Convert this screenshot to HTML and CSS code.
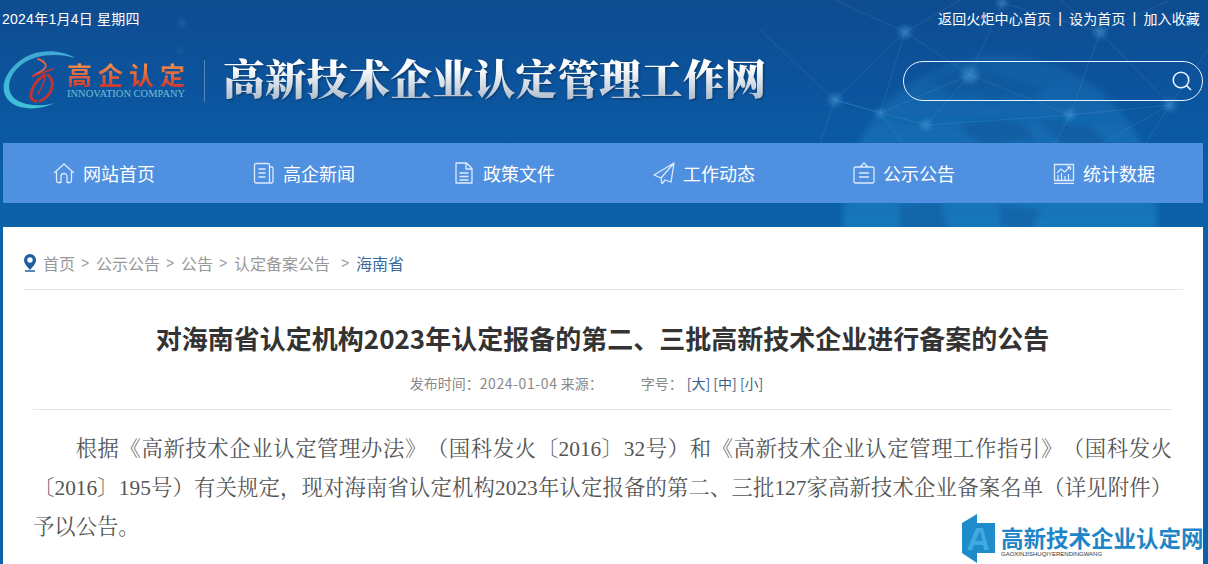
FILE: index.html
```html
<!DOCTYPE html>
<html lang="zh-CN">
<head>
<meta charset="utf-8">
<title>高新技术企业认定管理工作网</title>
<link rel="stylesheet" href="styles.css">
</head>
<body>
<svg class="bg-art" width="1208" height="232" viewBox="0 0 1208 232" aria-hidden="true">
  <defs>
    <linearGradient id="globe" x1="0" y1="0" x2="0" y2="1">
      <stop offset="0" stop-color="#2a86c8" stop-opacity=".2"/>
      <stop offset=".5" stop-color="#1c86c8" stop-opacity=".55"/>
      <stop offset="1" stop-color="#22a0d2" stop-opacity=".75"/>
    </linearGradient>
    <filter id="soft"><feGaussianBlur stdDeviation="2.500"/></filter>
    <filter id="softer"><feGaussianBlur stdDeviation="3"/></filter>
  </defs>
  <circle cx="1000" cy="212" r="157" fill="url(#globe)" filter="url(#softer)"/>
  <path d="M930 75l50-6 30 10 32 8-10 12-22-4-16 6-20-8-24 4zM960 125l36-6 28 6 10 14-50 6-20-12zM1040 120l50 6 20 20-44 2zM1000 205l40 5-10 22-30-6zM900 205l40-3 10 30-50 0z" fill="#0b4f92" opacity=".4" filter="url(#soft)"/>
  <g stroke="#7cc2ee" stroke-width="1" opacity=".14" fill="none">
    <path d="M905 32L970 75 1002 3 1100 32 1070 115 970 75 880 113 905 32M1100 32L1170 105 1070 115 1035 180 1170 105 1208 50M880 113L940 190 1035 180 1110 200 1170 105M835 100L905 32M835 100L880 113M835 100L760 30M835 100L820 143M835 100L926 125 970 75M926 125L1070 115M905 32L960 0M1100 32L1060 0M1100 32L1170 0M905 32L835 0"/>
  </g>
  <g fill="#5fb0e6" opacity=".38" filter="url(#soft)">
    <circle cx="905" cy="32" r="6"/><circle cx="970" cy="75" r="8"/><circle cx="1002" cy="3" r="5"/><circle cx="1100" cy="32" r="6"/><circle cx="1070" cy="115" r="5"/><circle cx="880" cy="113" r="4"/><circle cx="835" cy="100" r="6"/><circle cx="1170" cy="105" r="6"/><circle cx="926" cy="125" r="5"/>
    <circle cx="182" cy="23" r="2.500"/><circle cx="180" cy="51" r="2"/>
  </g>
</svg>

<div class="page">
  <header class="site-header">
    <div class="topbar">
      <span class="today">2024年1月4日 星期四</span>
      <nav class="toplinks"><a>返回火炬中心首页</a><i>|</i><a>设为首页</a><i>|</i><a>加入收藏</a></nav>
    </div>
    <div class="brand-row">
      <div class="brand">
        <div class="logo">
          <svg class="logo-mark" width="76" height="60" viewBox="0 0 76 60" aria-hidden="true">
            <defs>
              <linearGradient id="arc" x1="0" y1="0" x2="0" y2="1">
                <stop offset="0" stop-color="#3fa9d2"/><stop offset="1" stop-color="#3fc3d8"/>
              </linearGradient>
            </defs>
            <path d="M72 7C55-3 30-2 14 12-2 26-4 44 10 53c10 6 28 6 42-1-14 4-32 3-41-5C2 38 6 24 18 14 32 3 55 2 72 7z" fill="url(#arc)"/>
            <g fill="none" stroke="#c8322f" stroke-linecap="round">
              <path d="M35 8c8 3 10 7 5 11-4 3-7 4-10 6" stroke-width="2" stroke="#d8604e"/>
              <path d="M30 25c6-2 12-4 20-7" stroke-width="1.800"/>
              <path d="M42 24c-8 4-14 13-14 21 0 3 2 5 5 5" stroke-width="2.800"/>
              <path d="M45 24c5 4 6 12 1 19-3 4-6 6-9 7" stroke-width="2.800"/>
              <path d="M42 26c-1 6-4 12-7 17" stroke-width="1.500"/>
            </g>
          </svg>
          <div class="logo-text">
            <div class="logo-cn">高企认定</div>
            <div class="logo-en">INNOVATION COMPANY</div>
          </div>
        </div>
        <span class="brand-rule"></span>
        <h1 class="site-title">高新技术企业认定管理工作网</h1>
      </div>
      <div class="search">
        <svg width="22" height="22" viewBox="0 0 22 22" fill="none" stroke="#e8f5ff" stroke-width="1.600" aria-hidden="true"><circle cx="10" cy="10" r="7.800"/><path d="M15.600 15.600L20 20"/></svg>
      </div>
    </div>
    <nav class="mainnav">
      <a class="nav-item">
        <svg class="nav-ico" viewBox="0 0 22 22" aria-hidden="true"><path d="M1 11L11 2l10 9M3.500 9.500V19a1.500 1.500 0 0 0 1.500 1.500h3V14.500a3 3 0 0 1 6 0V20.500h3a1.500 1.500 0 0 0 1.500-1.500V9.500"/></svg>网站首页</a>
      <a class="nav-item">
        <svg class="nav-ico" viewBox="0 0 22 22" aria-hidden="true"><path d="M3 1.500h12a1.500 1.500 0 0 1 1.500 1.500v18H3A1.500 1.500 0 0 1 1.500 19.500V3A1.500 1.500 0 0 1 3 1.500zM17 5h1.500A1.500 1.500 0 0 1 20 6.500V19a2 2 0 0 1-2 2h-2M5.500 7h7M5.500 11h7M5.500 15h7"/></svg>高企新闻</a>
      <a class="nav-item">
        <svg class="nav-ico" viewBox="0 0 22 22" aria-hidden="true"><path d="M3 1h10.500L19 6.500V21H3zM13 1v6h6M6.500 11h9M6.500 14.500h9M6.500 18h9"/></svg>政策文件</a>
      <a class="nav-item">
        <svg class="nav-ico" viewBox="0 0 22 22" aria-hidden="true"><path d="M21 1L1 13l7 3 1 6 3-4 6 2zM21 1L8 16"/></svg>工作动态</a>
      <a class="nav-item">
        <svg class="nav-ico" viewBox="0 0 22 22" aria-hidden="true"><path d="M2.500 5h17A1.500 1.500 0 0 1 21 6.500v13a1.500 1.500 0 0 1-1.500 1.500h-17A1.500 1.500 0 0 1 1 19.500v-13A1.500 1.500 0 0 1 2.500 5zM7 5l4-4 4 4M6 11h10M6 15h10"/></svg>公示公告</a>
      <a class="nav-item">
        <svg class="nav-ico" viewBox="0 0 22 22" aria-hidden="true"><path d="M1.500 18.500V2.500h19v16zM1 21.500h20M5 18v-5M8.500 18v-7M12 18v-4M15.500 18v-6M4 11l4-4 3.500 3L17 5M14 5h3.500v3"/></svg>统计数据</a>
    </nav>
  </header>

  <main class="panel">
    <div class="crumbs">
      <svg class="pin" width="14" height="18" viewBox="0 0 14 18" aria-hidden="true"><path d="M7 0a6 6 0 0 1 6 6c0 4-4 7.500-6 10C5 13.500 1 10 1 6a6 6 0 0 1 6-6zm0 3.300a2.700 2.700 0 1 0 0 5.400 2.700 2.700 0 0 0 0-5.400z" fill="#1c5e9e" fill-rule="evenodd"/><path d="M2 17h10" stroke="#1c5e9e" stroke-width="1.500"/></svg>
      <a>首页</a><span class="sep">&gt;</span><a>公示公告</a><span class="sep">&gt;</span><a>公告</a><span class="sep">&gt;</span><a>认定备案公告</a><span class="sep sep-wide">&gt;</span><a class="current">海南省</a>
    </div>
    <article class="article">
      <h2 class="article-title">对海南省认定机构2023年认定报备的第二、三批高新技术企业进行备案的公告</h2>
      <div class="meta"><span>发布时间：<span class="date">2024-01-04</span> 来源：</span><span class="size-label">字号：</span><span class="sizes"><a>[大]</a> <a>[中]</a> <a>[小]</a></span></div>
      <p class="article-body">根据《高新技术企业认定管理办法》（国科发火〔2016〕32号）和《高新技术企业认定管理工作指引》（国科发火〔2016〕195号）有关规定，现对海南省认定机构2023年认定报备的第二、三批127家高新技术企业备案名单（详见附件）予以公告。</p>
    </article>
  </main>
</div>

<div class="watermark">
  <svg width="38" height="50" viewBox="0 0 38 50" aria-hidden="true"><path d="M1 9L16 0v9h18v30H16v10L1 39z" fill="#1e8ccb"/><path d="M6 36L15 14h7l6 22h-5l-1-5h-9l-2 5zm8.500-9h7l-2-9h-1z" fill="#3fa9e0"/></svg>
  <div class="wm-text"><div class="wm-cn">高新技术企业认定网</div><div class="wm-en">GAOXINJISHUQIYERENDINGWANG</div></div>
</div>
</body>
</html>
```
FILE: styles.css
```css
* { box-sizing: border-box; }
html, body { margin: 0; height: 564px; overflow: hidden; }
body {
  position: relative;
  background: linear-gradient(180deg, #0e4c90 0, #0c539c 80px, #0a5ba4 150px, #0c62a8 232px);
  font-family: "Liberation Sans", "Noto Sans CJK SC", sans-serif;
  color: #333;
  text-spacing-trim: space-all;
}
a { color: inherit; text-decoration: none; }
.bg-art { position: absolute; left: 0; top: 0; }
.page { position: relative; width: 1200px; margin-left: 3px; }

.topbar {
  height: 36px;
  margin: 0 3px 0 -1px;
  display: flex;
  justify-content: space-between;
  align-items: center;
  color: #fff;
  font-size: 14px;
}
.today { letter-spacing: .25px; }
.toplinks { display: flex; align-items: center; letter-spacing: .15px; }
.toplinks i { font-style: normal; margin: 0 7px; }

.brand-row {
  height: 107px;
  padding-bottom: 17px;
  display: flex;
  justify-content: space-between;
  align-items: center;
}
.brand { display: flex; align-items: center; }
.logo { display: flex; align-items: center; width: 181px; }
.logo-mark { flex: none; margin-right: -12px; }
.logo-text { margin-bottom: 2px; }
.logo-cn {
  font: 700 25px/26px "Noto Sans CJK SC", sans-serif;
  letter-spacing: 6px;
  white-space: nowrap;
  background: linear-gradient(180deg, #f29a50, #d0382e);
  -webkit-background-clip: text;
  background-clip: text;
  color: transparent;
}
.logo-en {
  margin-top: 1px;
  font: 10.500px/11px "Liberation Serif", serif;
  color: #6fc0d4;
  white-space: nowrap;
}
.brand-rule { width: 1px; height: 42px; margin: 0 18px 0 20px; background: rgba(255,255,255,.3); }
.site-title {
  margin: 0 0 8px;
  font: 900 41.800px/50px "Noto Serif CJK SC", "Noto Sans CJK SC", serif;
  white-space: nowrap;
  background: linear-gradient(180deg, #fff 30%, #a9b8c8 100%);
  -webkit-background-clip: text;
  background-clip: text;
  color: transparent;
  filter: drop-shadow(1px 1px 1px rgba(0,0,0,.35));
}
.search {
  width: 300px;
  height: 40px;
  border: 1px solid #e6f3fc;
  border-radius: 20px;
  display: flex;
  align-items: center;
  justify-content: flex-end;
  padding-right: 9px;
}

.mainnav {
  height: 60px;
  display: grid;
  grid-template-columns: repeat(6, 200px);
  background: #5090e0;
}
.nav-item {
  display: flex;
  align-items: center;
  padding-left: 50px;
  font: 400 18px/1 "Noto Sans CJK SC", sans-serif;
  color: #fff;
}
.nav-ico {
  width: 22px;
  height: 22px;
  margin-right: 8px;
  fill: none;
  stroke: #dbeafc;
  stroke-width: 1.300;
  stroke-linejoin: round;
}

.panel {
  margin-top: 24px;
  background: #fff;
  height: 337px;
  padding: 0 20px;
  overflow: hidden;
}
.crumbs {
  height: 63px;
  padding-top: 9px;
  border-bottom: 1px solid #e5e5e5;
  display: flex;
  align-items: center;
  font: 400 16px/1 "Noto Sans CJK SC", sans-serif;
  color: #999;
}
.pin { margin-right: 6px; }
.sep { margin: 0 6px; width: 9px; font-family: "Liberation Sans", sans-serif; font-size: 14px; }
.sep-wide { margin: 0 6px 0 11px; }
.current { color: #3a6a9c; }

.article { padding: 0 11px 0 10px; }
.article-title {
  margin: 0;
  padding-top: 29px;
  text-align: center;
  color: #333;
  font: 700 26px/38px "Noto Sans CJK SC", sans-serif;
  white-space: nowrap;
}
.meta {
  margin-top: 16px;
  height: 37px;
  padding-right: 32px;
  border-bottom: 1px solid #e5e5e5;
  display: flex;
  justify-content: center;
  font: 400 14px/20px "Noto Sans CJK SC", sans-serif;
  color: #888;
}
.date { letter-spacing: .6px; }
.size-label { margin-left: 38px; }
.sizes { margin-left: 4px; color: #3a5f86; }
.article-body {
  margin: 20px 0 0;
  font: 400 21.330px/39px "Liberation Serif", "Noto Serif CJK SC", "Noto Sans CJK SC", serif;
  color: #555;
  text-indent: 2em;
  text-align: justify;
}

.watermark {
  position: absolute;
  left: 961px;
  top: 514px;
  display: flex;
  align-items: center;
  gap: 2px;
}
.wm-text { margin-top: 3px; }
.wm-cn { font: 700 22.500px/26px "Noto Sans CJK SC", sans-serif; color: #1e86c8; white-space: nowrap; }
.wm-en { font: 6px/8px "Liberation Sans", sans-serif; color: #333; white-space: nowrap; }
```
